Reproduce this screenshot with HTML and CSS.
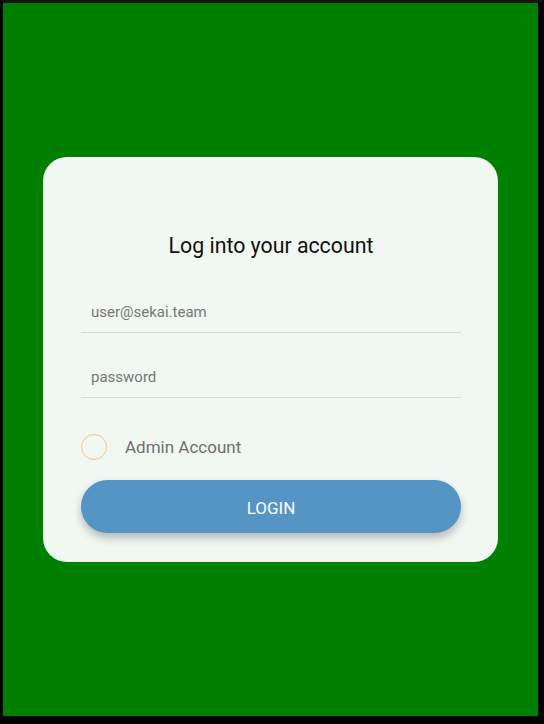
FILE: index.html
```html
<!DOCTYPE html>
<html lang="en">
<head>
  <meta charset="UTF-8" />
  <meta name="viewport" content="width=device-width, initial-scale=1.0"/>
  <title>Login</title>
  <link rel="stylesheet" href="styles.css">
</head>
<body>

  <div class="screen">
    <form class="card" onsubmit="return false">
      <h1>Log into your account</h1>
      <input class="field" type="email" placeholder="user@sekai.team">
      <input class="field" type="password" placeholder="password">
      <label class="check">
        <span class="circle"></span>
        <span class="check-label">Admin Account</span>
      </label>
      <button class="login" type="submit">LOGIN</button>
    </form>
  </div>

</body>
</html>
```

FILE: styles.css
```css
html, body {
  margin: 0;
  height: 100%;
}

body {
  background: #000;
  font-family: Roboto, "Noto Sans", sans-serif;
}

.screen {
  box-sizing: border-box;
  height: 100%;
  border-top: 3px solid #141414;
  border-left: 3px solid #000;
  border-right: 6px solid #000;
  border-bottom: 8px solid #000;
  background: #008000;
  display: flex;
  align-items: center;
  justify-content: center;
}

.card {
  box-sizing: border-box;
  width: 455px;
  background: #f1f8f2;
  border-radius: 24px;
  padding: 77px 37px 29px 38px;
  display: flex;
  flex-direction: column;
}

h1 {
  margin: 0;
  font-size: 21.3px;
  font-weight: 400;
  line-height: 24px;
  text-align: center;
  color: #111;
}

.field {
  height: 41px;
  margin: 33px 0 0;
  padding: 0 10px;
  border: none;
  border-bottom: 1px solid #d8dcd9;
  background: transparent;
  font-family: inherit;
  font-size: 15px;
  color: #333;
  outline: none;
}

.field + .field {
  margin-top: 23px;
}

.field::placeholder {
  color: #777;
}

.check {
  display: flex;
  align-items: center;
  gap: 18px;
  margin-top: 36px;
}

.circle {
  width: 24px;
  height: 24px;
  border: 1px solid #ffc37d;
  border-radius: 50%;
}

.check-label {
  font-size: 17px;
  color: #6f6f6f;
}

.login {
  margin-top: 20px;
  height: 53px;
  padding-top: 3px;
  border: none;
  border-radius: 27px;
  background: #5595c6;
  color: #fff;
  font-family: inherit;
  font-size: 17px;
  box-shadow: 0 5px 8px rgba(0, 0, 0, 0.25);
}
```
